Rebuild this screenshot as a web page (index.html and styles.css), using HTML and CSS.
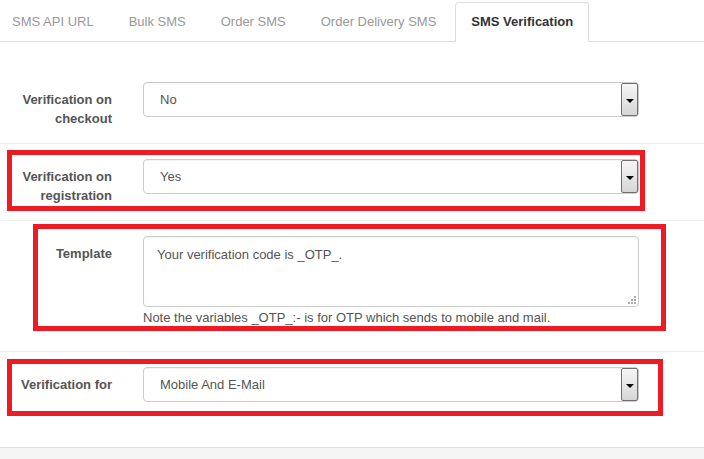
FILE: index.html
```html
<!DOCTYPE html>
<html lang="en">
  <head>
    <meta charset="UTF-8" />
    <meta name="viewport" content="width=device-width, initial-scale=1.0" />
    <title>SMS Settings</title>
    <link rel="stylesheet" href="styles.css">
  </head>
  <body>
    <ul class="nav-tabs">
      <li><a href="#">SMS API URL</a></li>
      <li><a href="#">Bulk SMS</a></li>
      <li><a href="#">Order SMS</a></li>
      <li><a href="#">Order Delivery SMS</a></li>
      <li class="active"><a href="#">SMS Verification</a></li>
    </ul>

    <div class="form">
      <div class="row">
        <div class="label">Verification on checkout</div>
        <div class="control">
          <div class="select">No<span class="arrow"></span></div>
        </div>
      </div>

      <div class="row">
        <div class="mark mark-registration"></div>
        <div class="label">Verification on registration</div>
        <div class="control">
          <div class="select">Yes<span class="arrow"></span></div>
        </div>
      </div>

      <div class="row">
        <div class="mark mark-template"></div>
        <div class="label">Template</div>
        <div class="control">
          <div class="textarea">
            Your verification code is _OTP_.
            <!-- resize grip -->
            <svg class="grip" width="9" height="9" viewBox="0 0 9 9">
              <rect x="7" y="1" width="2" height="2" fill="#aaa"/>
              <rect x="4" y="4" width="2" height="2" fill="#aaa"/>
              <rect x="7" y="4" width="2" height="2" fill="#aaa"/>
              <rect x="1" y="7" width="2" height="2" fill="#aaa"/>
              <rect x="4" y="7" width="2" height="2" fill="#aaa"/>
              <rect x="7" y="7" width="2" height="2" fill="#aaa"/>
            </svg>
          </div>
          <p class="help">Note the variables _OTP_:- is for OTP which sends to mobile and mail.</p>
        </div>
      </div>

      <div class="row last">
        <div class="mark mark-for"></div>
        <div class="label">Verification for</div>
        <div class="control">
          <div class="select">Mobile And E-Mail<span class="arrow"></span></div>
        </div>
      </div>
    </div>

    <div class="footer"></div>
  </body>
</html>
```

FILE: styles.css
```css
html, body {
  height: 100%;
}

body {
  margin: 0;
  font-family: "Liberation Sans", Arial, sans-serif;
  font-size: 13px;
  line-height: 1.42857;
  color: #555;
  background-color: #fff;
  display: flex;
  flex-direction: column;
}

/* tabs */

.nav-tabs {
  display: flex;
  list-style: none;
  margin: 0 0 0 -4px;
  padding: 2px 0 0;
  border-bottom: 1px solid #ddd;
}

.nav-tabs li {
  margin: 0 3px -1px 0;
}

.nav-tabs a {
  display: block;
  padding: 10px 15px;
  line-height: 18px;
  border: 1px solid transparent;
  border-radius: 4px 4px 0 0;
  color: #999;
  text-decoration: none;
}

.nav-tabs .active a {
  color: #333;
  font-weight: bold;
  background-color: #fff;
  border-color: #ddd #ddd transparent;
}

/* form rows */

.form {
  padding: 25px 0 29px;
}

.row {
  position: relative;
  display: flex;
  padding: 15px 0;
  border-bottom: 1px solid #eee;
}

.row.last {
  border-bottom: none;
  padding-bottom: 16px;
}

.label {
  width: 112px;
  flex-shrink: 0;
  padding-top: 8px;
  line-height: 19px;
  text-align: right;
  font-weight: bold;
}

.control {
  width: 496px;
  margin-left: 31px;
}

.select {
  position: relative;
  height: 35px;
  box-sizing: border-box;
  display: flex;
  align-items: center;
  padding: 1px 0 0 16px;
  border: 1px solid #ccc;
  border-radius: 4px;
  box-shadow: inset 0 1px 1px rgba(0, 0, 0, 0.05);
}

.arrow {
  position: absolute;
  top: 0;
  right: 0;
  bottom: 0;
  width: 15px;
  border: 1px solid #707070;
  border-radius: 2px;
  background: linear-gradient(#f6f6f6, #d6d6d6);
}

.arrow::after {
  content: "";
  position: absolute;
  left: 4px;
  top: 15px;
  border-left: 4px solid transparent;
  border-right: 4px solid transparent;
  border-top: 4px solid #000;
}

.textarea {
  position: relative;
  height: 71px;
  box-sizing: border-box;
  padding: 9px 13px 7px;
  border: 1px solid #ccc;
  border-radius: 4px;
  box-shadow: inset 0 1px 1px rgba(0, 0, 0, 0.05);
}

.grip {
  position: absolute;
  right: 2px;
  bottom: 2px;
}

.help {
  margin: 2px 0 9px;
  line-height: 18px;
}

/* red highlight boxes drawn over the rows */

.mark {
  position: absolute;
  box-sizing: border-box;
  border: 5px solid #ed1c24;
  pointer-events: none;
}

.mark-registration {
  left: 7px;
  top: 6px;
  width: 638px;
  height: 61px;
}

.mark-template {
  left: 33px;
  top: 3px;
  width: 633px;
  height: 107px;
}

.mark-for {
  left: 7px;
  top: 7px;
  width: 656px;
  height: 57px;
}

.footer {
  flex: 1;
  border-top: 1px solid #ddd;
  background-color: #f5f5f5;
}
```
